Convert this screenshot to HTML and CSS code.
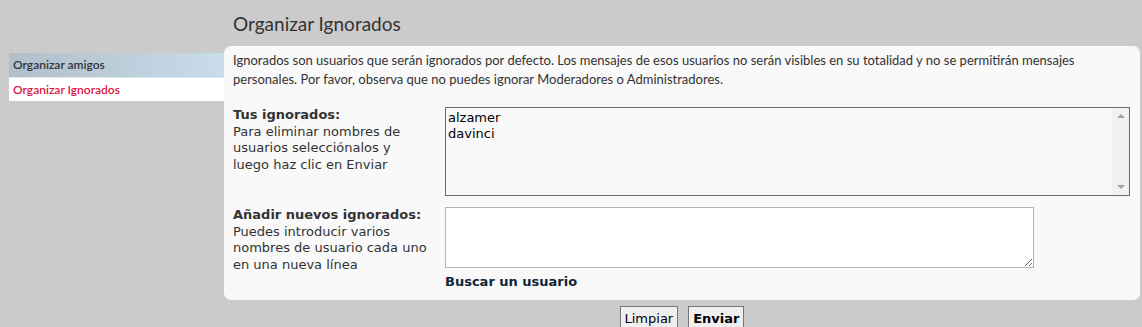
FILE: index.html
```html
<!DOCTYPE html>
<html lang="es">
<head>
<meta charset="utf-8">
<title>Organizar Ignorados</title>
<link rel="stylesheet" href="styles.css">
</head>
<body>
<div class="page">
  <nav class="sidebar">
    <a class="side-item side-item--head" href="#">Organizar amigos</a>
    <a class="side-item side-item--active" href="#">Organizar Ignorados</a>
  </nav>
  <main class="main">
    <h2 class="title">Organizar Ignorados</h2>
    <section class="panel">
      <p class="intro">Ignorados son usuarios que serán ignorados por defecto. Los mensajes de esos usuarios no serán visibles en su totalidad y no se permitirán mensajes personales. Por favor, observa que no puedes ignorar Moderadores o Administradores.</p>
      <div class="row row--first">
        <div class="label">
          <strong>Tus ignorados:</strong><br>
          Para eliminar nombres de usuarios selecciónalos y luego haz clic en Enviar
        </div>
        <div class="listbox">
          <div class="options">
            <div class="option">alzamer</div>
            <div class="option">davinci</div>
          </div>
          <div class="scrollbar">
            <span class="arrow arrow--up"></span>
            <span class="arrow arrow--down"></span>
          </div>
        </div>
      </div>
      <div class="row">
        <div class="label">
          <strong>Añadir nuevos ignorados:</strong><br>
          Puedes introducir varios nombres de usuario cada uno en una nueva línea
        </div>
        <div class="field">
          <textarea class="textarea"></textarea>
          <a class="find" href="#">Buscar un usuario</a>
        </div>
      </div>
    </section>
    <div class="buttons">
      <button class="btn" type="reset">Limpiar</button>
      <button class="btn btn--primary" type="submit">Enviar</button>
    </div>
  </main>
</div>
</body>
</html>
```
FILE: styles.css
```css
html, body {
  margin: 0;
  padding: 0;
}
body {
  background: #cbcbcb;
  font-family: "DejaVu Sans", Verdana, sans-serif;
  color: #333;
  overflow: hidden;
  height: 327px;
}
.page {
  display: flex;
  align-items: flex-start;
  padding-left: 9px;
}
.sidebar {
  width: 215px;
  margin-top: 53px;
  display: flex;
  flex-direction: column;
}
.side-item {
  display: block;
  font-family: Lato, "Open Sans", sans-serif;
  font-size: 12px;
  font-weight: 600;
  text-decoration: none;
  padding-left: 4px;
  line-height: 24px;
}
.side-item--head {
  height: 24px;
  color: #333;
  background: linear-gradient(to right, #b0bfcb, #c9dcea);
  border-bottom: 1px solid #dfe6ec;
}
.side-item--active {
  height: 23px;
  color: #dc1640;
  background: #fff;
}
.main {
  width: 916px;
  display: flex;
  flex-direction: column;
}
.title {
  margin: 0;
  padding: 12px 0 0 9px;
  height: 46px;
  box-sizing: border-box;
  font-family: Lato, "Open Sans", sans-serif;
  font-weight: 400;
  font-size: 19px;
  line-height: 24px;
  color: #333;
}
.panel {
  background: #f9f9f9;
  border-radius: 7px;
  padding: 5px 9px 10px 9px;
  height: 254px;
  box-sizing: border-box;
}
.intro {
  margin: 0;
  font-family: Lato, "Open Sans", sans-serif;
  font-size: 13px;
  line-height: 19px;
  color: #333;
}
.row {
  display: flex;
  margin-top: 11px;
}
.row--first {
  margin-top: 18px;
}
.label {
  width: 212px;
  flex: none;
  font-size: 13px;
  line-height: 16.5px;
  color: #333;
  padding-right: 16px;
  box-sizing: border-box;
}
.label strong {
  font-weight: 700;
  white-space: nowrap;
}
.listbox {
  width: 685px;
  height: 89px;
  box-sizing: border-box;
  border: 1px solid #6b6b6b;
  background: #f9f9f9;
  display: flex;
}
.options {
  flex: 1;
  padding: 2px 2px;
  font-size: 13px;
  line-height: 16px;
  color: #000;
}
.scrollbar {
  width: 17px;
  background: #f1f1f1;
  display: flex;
  flex-direction: column;
  justify-content: space-between;
  align-items: center;
  padding: 6px 0;
  box-sizing: border-box;
}
.arrow {
  width: 0;
  height: 0;
  border-left: 4px solid transparent;
  border-right: 4px solid transparent;
}
.arrow--up {
  border-bottom: 4px solid #a3a3a3;
}
.arrow--down {
  border-top: 4px solid #a3a3a3;
}
.field {
  display: flex;
  flex-direction: column;
  align-items: flex-start;
}
.textarea {
  width: 589px;
  height: 61px;
  box-sizing: border-box;
  border: 1px solid #b4b4b4;
  background: #fff;
  margin: 0;
  font-family: "DejaVu Sans", sans-serif;
  font-size: 13px;
}
.find {
  margin-top: 5px;
  font-size: 13px;
  font-weight: 700;
  line-height: 18px;
  color: #10263a;
  text-decoration: none;
}
.buttons {
  display: flex;
  justify-content: center;
  gap: 10px;
  padding-top: 6px;
}
.btn {
  font-family: "DejaVu Sans", sans-serif;
  font-size: 13px;
  color: #000;
  background: #efefef;
  border: 1px solid #767676;
  border-radius: 0;
  padding: 4px 4px 6px 4px;
  line-height: 16px;
}
.btn--primary {
  font-weight: 700;
}
```
